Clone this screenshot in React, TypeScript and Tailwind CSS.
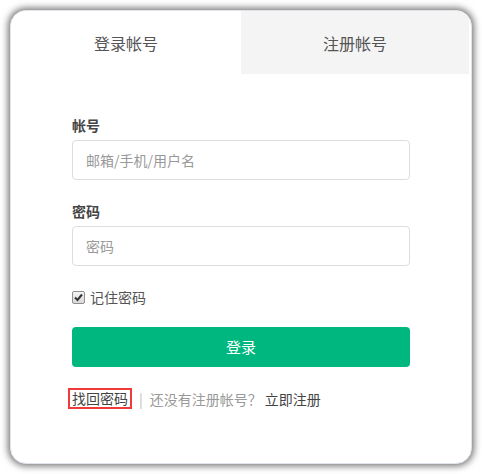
import React from 'react';

const font = { fontFamily: '"Noto Sans CJK SC", "Microsoft YaHei", sans-serif' };

const App: React.FC = () => {
  const [tab, setTab] = React.useState<'login' | 'register'>('login');
  const [remember, setRemember] = React.useState(true);

  return (
    <div className="w-[482px] h-[474px] bg-white p-[10px]" style={font}>
      <div className="h-full rounded-[16px] border border-[#dfe4ea] bg-white shadow-[0_0_7px_2px_rgba(0,0,0,0.55)] overflow-hidden flex flex-col">
        {/* tabs */}
        <div className="flex h-[63px] shrink-0">
          <button
            onClick={() => setTab('login')}
            className={`w-[230px] text-[16px] text-[#555] ${tab === 'login' ? 'bg-white' : 'bg-[#f4f4f4]'}`}
          >
            登录帐号
          </button>
          <button
            onClick={() => setTab('register')}
            className={`flex-1 mr-[2px] text-[16px] text-[#555] ${tab === 'register' ? 'bg-white' : 'bg-[#f4f4f4]'}`}
          >
            注册帐号
          </button>
        </div>

        <form className="px-[61px] pt-[41px] flex flex-col" onSubmit={(e) => e.preventDefault()}>
          <label className="text-[14px] leading-[20px] font-bold text-[#444] mb-[5px]">帐号</label>
          <input
            className="h-[40px] rounded-[4px] border border-[#ddd] px-[13px] text-[14px] text-[#333] placeholder:text-[#999] outline-none"
            placeholder="邮箱/手机/用户名"
          />

          <label className="mt-[21px] text-[14px] leading-[20px] font-bold text-[#444] mb-[5px]">密码</label>
          <input
            type="password"
            className="h-[40px] rounded-[4px] border border-[#ddd] px-[13px] text-[14px] text-[#333] placeholder:text-[#999] outline-none"
            placeholder="密码"
          />

          <div className="mt-[21px] flex items-center h-[20px] text-[14px] text-[#555]">
            <span
              onClick={() => setRemember(!remember)}
              className="w-[13px] h-[13px] rounded-[2px] border border-[#8f8f8f] bg-gradient-to-b from-[#f4f4f4] to-[#d8d8d8] flex items-center justify-center mr-[5px] cursor-pointer"
            >
              {remember && (
                <svg width="9" height="9" viewBox="0 0 9 9">
                  <path d="M1 4.5 L3.5 7 L8 1.5" stroke="#333" strokeWidth="2" fill="none" />
                </svg>
              )}
            </span>
            记住密码
          </div>

          <button
            type="submit"
            className="mt-[20px] h-[40px] rounded-[4px] bg-[#00b87f] text-white text-[15px]"
          >
            登录
          </button>

          <div className="mt-[21px] flex items-center text-[14px] leading-[20px] -ml-[4px]">
            <a href="#" className="border-2 border-[#f03a3a] px-[2px] leading-[17px] text-[#444]">
              找回密码
            </a>
            <span className="ml-[7px] mr-[7px] text-[#bbb]">|</span>
            <span className="text-[#999]">还没有注册帐号？</span>
            <a href="#" className="ml-[3px] text-[#444]">立即注册</a>
          </div>
        </form>
      </div>
    </div>
  );
};

export default App;
